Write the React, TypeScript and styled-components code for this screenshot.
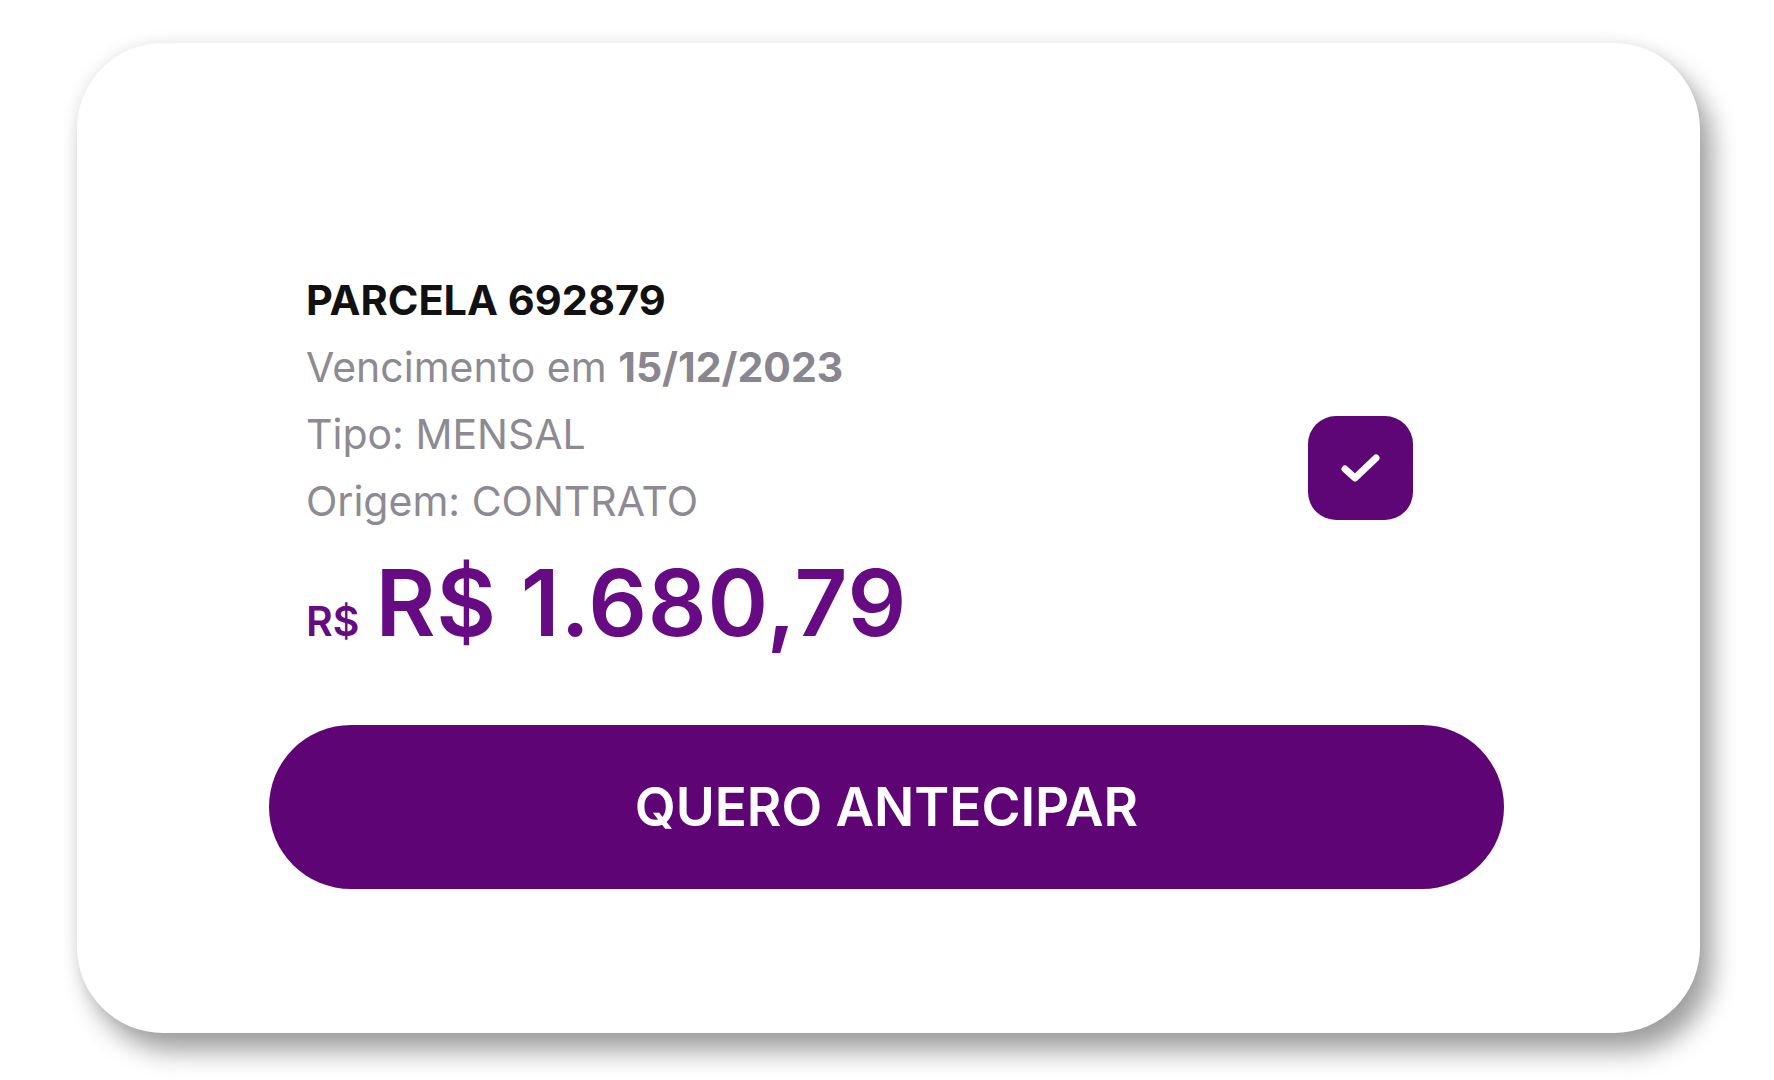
import styled, { createGlobalStyle } from "styled-components";

const GlobalStyle = createGlobalStyle`
	body {
		margin: 0;
		background: #ffffff;
		font-family: Inter, "Noto Sans", sans-serif;
	}
`;

const Page = styled.div`
	padding: 43px 0 47px 77px;
`;

const Card = styled.div`
	box-sizing: border-box;
	width: 1623px;
	height: 990px;
	padding: 224px 196px 0 192px;
	background: #ffffff;
	border-radius: 86px;
	box-shadow: 12px 18px 26px rgba(0, 0, 0, 0.38), -4px -4px 14px rgba(0, 0, 0, 0.05);
`;

const InfoRow = styled.div`
	display: flex;
	align-items: center;
	justify-content: space-between;
	padding: 0 91px 0 37px;
`;

const Details = styled.div`
	display: flex;
	flex-direction: column;
`;

const Title = styled.p`
	margin: 0;
	font-size: 41.5px;
	line-height: 67px;
	font-weight: 700;
	color: #111111;
`;

const Info = styled.p`
	margin: 0;
	font-size: 41px;
	line-height: 67px;
	font-weight: 400;
	color: #8e8a93;
`;

const Strong = styled.span`
	font-weight: 700;
	color: #8a8690;
`;

const Amount = styled.div`
	display: flex;
	align-items: baseline;
	gap: 16px;
	margin-top: 22px;
	color: #660b84;
	line-height: 92px;
`;

const Currency = styled.span`
	font-size: 41px;
	font-weight: 600;
`;

const Value = styled.span`
	font-size: 92px;
	font-weight: 600;
	letter-spacing: 0.8px;
`;

const Checkbox = styled.div`
	display: flex;
	align-items: center;
	justify-content: center;
	width: 105px;
	height: 104px;
	margin-top: 2px;
	border-radius: 28px;
	background: #5f0677;
`;

const Button = styled.button`
	display: flex;
	align-items: center;
	justify-content: center;
	width: 100%;
	height: 164px;
	margin-top: 58px;
	border: none;
	border-radius: 82px;
	background: #5e0475;
	color: #ffffff;
	font-family: Inter, "Noto Sans", sans-serif;
	font-size: 53px;
	font-weight: 600;
	cursor: pointer;
`;

function App() {
	return (
		<>
			<GlobalStyle />
			<Page>
				<Card>
					<InfoRow>
						<Details>
							<Title>PARCELA 692879</Title>
							<Info>
								Vencimento em <Strong>15/12/2023</Strong>
							</Info>
							<Info>Tipo: MENSAL</Info>
							<Info>Origem: CONTRATO</Info>
							<Amount>
								<Currency>R$</Currency>
								<Value>R$ 1.680,79</Value>
							</Amount>
						</Details>
						<Checkbox>
							<svg width="40" height="32" viewBox="0 0 40 32" fill="none">
								<path
									d="M4 17 L14 26 L35 6"
									stroke="#ffffff"
									strokeWidth="7"
									strokeLinecap="round"
									strokeLinejoin="round"
								/>
							</svg>
						</Checkbox>
					</InfoRow>
					<Button>QUERO ANTECIPAR</Button>
				</Card>
			</Page>
		</>
	);
}

export default App;
